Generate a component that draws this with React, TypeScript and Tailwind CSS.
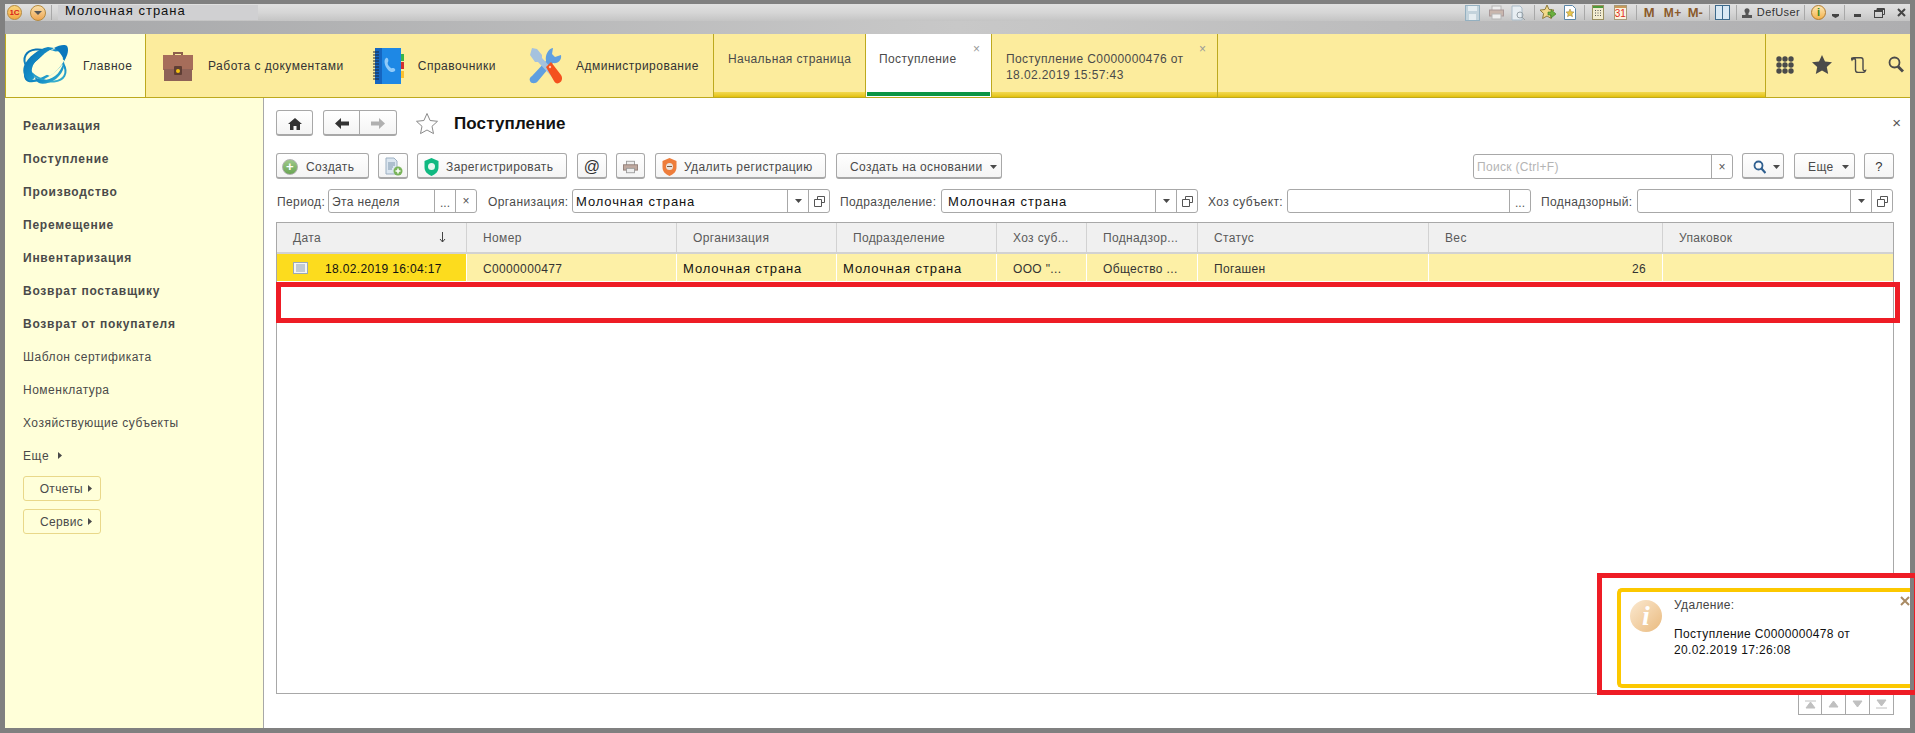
import { ReactNode } from "react";

const font = "font-['Liberation_Sans',Arial,sans-serif]";

const Caret = ({ className = "" }: { className?: string }) => (
  <svg width="7" height="4" viewBox="0 0 7 4" className={className}>
    <path d="M0 0h7L3.5 4z" fill="#4a4a4a" />
  </svg>
);

const RightArrow = () => (
  <svg width="4" height="7" viewBox="0 0 4 7" className="shrink-0">
    <path d="M0 0v7l4-3.5z" fill="#4a4a4a" />
  </svg>
);

const Sep = ({ className = "" }: { className?: string }) => <div className={`w-px h-[15px] bg-[#a8a8a8] shrink-0 ${className}`} />;

const Logo = () => (
  <svg width="48" height="43" viewBox="0 0 48 43" className="shrink-0">
    <defs>
      <linearGradient id="lg" x1="0" y1="0" x2="1" y2="1">
        <stop offset="0" stopColor="#0668ad" />
        <stop offset="0.55" stopColor="#1590c8" />
        <stop offset="1" stopColor="#45bccf" />
      </linearGradient>
    </defs>
    <ellipse cx="24" cy="21.500" rx="23" ry="10" transform="rotate(-35 24 21.500)" fill="none" stroke="url(#lg)" strokeWidth="2.500" />
    <ellipse cx="24" cy="21.500" rx="22" ry="14" transform="rotate(28 24 21.500)" fill="none" stroke="url(#lg)" strokeWidth="2" />
    <path d="M33 4c5-3 11-4 13-2 2 3 1 9-3 15-1-5-5-10-10-13z" fill="#0a78bd" />
    <path d="M27 3C17 5 7 13 3 22c-2 6 0 12 6 15 2-1 4-2 5-4C8 28 11 20 18 14c6-5 12-8 15-10z" fill="url(#lg)" />
    <path d="M43 17C38 9 32 6 29 6 22 10 16 16 14 22c4 4 9 8 15 10 6-4 11-10 14-15z" fill="#ffffd9" />
    <path d="M14 33c5 4 13 4 20-1 4-3 7-8 9-15 1 7-2 13-8 18-6 4-13 6-17 4-2-1-4-3-4-6z" fill="url(#lg)" />
    <path d="M29 31L43 16" stroke="#ffffd9" strokeWidth="0.800" />
  </svg>
);

const Briefcase = () => (
  <svg width="32" height="32" viewBox="0 0 32 32" className="shrink-0">
    <path d="M11 6V2h10v4h-2V4h-6v2z" fill="#8d5f4d" />
    <rect x="1" y="5" width="30" height="15" fill="#a66d5a" />
    <rect x="2" y="19" width="28" height="12" fill="#8e6257" />
    <rect x="12" y="16" width="8" height="9" rx="1" fill="#5f3e34" />
    <circle cx="16" cy="21" r="2" fill="#f5c211" />
  </svg>
);

const Book = () => (
  <svg width="32" height="38" viewBox="0 0 32 38" className="shrink-0">
    <rect x="3" y="1" width="26" height="36" fill="#1e88e5" />
    <rect x="3" y="1" width="7" height="36" fill="#1565c0" />
    <path d="M1 5h6M1 8h6M1 11h6M1 14h6M1 17h6M1 20h6M1 23h6M1 26h6M1 29h6M1 32h6" stroke="#1c2b3a" strokeWidth="1.2" />
    <rect x="29" y="7" width="3" height="7" fill="#3ab54a" />
    <rect x="29" y="15" width="3" height="7" fill="#d32f2f" />
    <rect x="29" y="24" width="3" height="7" fill="#fbc02d" />
    <path d="M14 11c2-1 3 3 2 4-1 1 0 4 3 6 1 1 2-1 4 1 1 2-1 3-3 3-5 0-10-11-6-14z" fill="#90caf9" />
  </svg>
);

const Tools = () => (
  <svg width="33" height="38" viewBox="0 0 33 38" className="shrink-0">
    <path d="M24 1l-1 6 3 3 6-2c1 5-3 9-8 8L9 34c-2 3-7 3-8 0-1-2 0-4 2-5l14-15C16 8 19 2 24 1z" fill="#5f9fe0" />
    <path d="M3 1l5 1 5 6v3l15 16-4 4L9 15H6L1 8z" fill="#a5c2de" />
    <path d="M17 20l5-5 10 13c2 3 1 7-2 8-2 1-4 0-5-2z" fill="#f4511e" />
    <circle cx="21" cy="20" r="1.200" fill="#ffc1ae" />
  </svg>
);

const MenuTab = ({ icon, label, className }: { icon: ReactNode; label: string; className: string }) => (
  <div className={`flex items-center text-[12px] text-[#333] ${className}`}>
    {icon}
    <span className="whitespace-nowrap tracking-[0.5px]">{label}</span>
  </div>
);

const OpenTab = ({ lines, width, active, closable }: { lines: string[]; width: string; active?: boolean; closable?: boolean }) => (
  <div className={`relative ${width} shrink-0 border-r border-[#bda91e] flex flex-col ${active ? "bg-white" : "bg-[#fcec9d]"}`}>
    <div className={`flex-1 pt-[17px] text-[12px] leading-[16px] text-[#4a4a4a] tracking-[0.4px] whitespace-nowrap ${active ? "pl-[13px]" : "pl-[14px]"}`}>
      {lines.map((l) => (
        <div key={l}>{l}</div>
      ))}
    </div>
    {closable && <span className="absolute right-[11px] top-[8px] text-[12px] leading-[14px] text-[#999]">×</span>}
    <div className={active ? "h-[4px] bg-[#0b9444] mx-px mb-[1px]" : "h-[5px] bg-gradient-to-b from-[#f2d94e] to-[#e3c100]"} />
  </div>
);

const SideItem = ({ label, bold }: { label: string; bold?: boolean }) => (
  <div className={`h-[33px] flex items-center text-[#4a4a4a] whitespace-nowrap ${bold ? "text-[12px] font-bold tracking-[0.75px]" : "text-[12px] tracking-[0.5px]"}`}>
    {label}
  </div>
);

const SideButton = ({ label }: { label: string }) => (
  <div className="w-[78px] h-[25px] border border-[#e9d88a] rounded-[3px] flex items-center justify-end pr-[8px] gap-[5px] text-[12px] tracking-[0.3px] text-[#4a4a4a]">
    {label}
    <RightArrow />
  </div>
);

const Btn = ({ className, children }: { className: string; children: ReactNode }) => (
  <div className={`h-[26px] shrink-0 border border-[#a8a8a8] rounded-[3px] border-b-2 bg-gradient-to-b from-white to-[#f4f4f4] flex items-center pt-[2px] text-[12px] tracking-[0.4px] text-[#4a4a4a] whitespace-nowrap ${className}`}>
    {children}
  </div>
);

const Label = ({ className, children }: { className: string; children: ReactNode }) => (
  <div className={`shrink-0 pt-[2px] text-[12px] tracking-[0.4px] text-[#4a4a4a] whitespace-nowrap ${className}`}>{children}</div>
);

const OpenIcon = () => (
  <svg width="11" height="11" viewBox="0 0 11 11" fill="none" stroke="#555" strokeWidth="1">
    <path d="M3.5 3V.5h7v6H8M.5 3.5h7v7h-7z" />
  </svg>
);

const Field = ({ width, value, pick, clear, arrow, open, strong, pad = "pl-[3px]" }: { width: string; value?: string; pick?: boolean; clear?: boolean; arrow?: boolean; open?: boolean; strong?: boolean; pad?: string }) => (
  <div className={`${width} h-[24px] shrink-0 border border-[#a8a8a8] rounded-[3px] flex items-stretch text-[12px]`}>
    <div className={`flex-1 pt-[2px] flex items-center whitespace-nowrap ${pad} ${strong ? "text-[#111] text-[13px] tracking-[0.9px]" : "text-[#4a4a4a] tracking-[0.4px]"}`}>{value}</div>
    {pick && <div className="w-[21px] border-l border-[#a8a8a8] flex items-center justify-center text-[#555] pt-[3px]">...</div>}
    {arrow && <div className="w-[21px] border-l border-[#a8a8a8] flex items-center justify-center"><Caret /></div>}
    {clear && <div className="w-[21px] border-l border-[#a8a8a8] flex items-center justify-center text-[#555]">×</div>}
    {open && <div className="w-[21px] border-l border-[#a8a8a8] flex items-center justify-center"><OpenIcon /></div>}
  </div>
);

const columns = [
  { label: "Номер", w: "w-[210px]", value: "С0000000477" },
  { label: "Организация", w: "w-[160px]", value: "Молочная страна", strong: true },
  { label: "Подразделение", w: "w-[160px]", value: "Молочная страна", strong: true },
  { label: "Хоз суб...", w: "w-[90px]", value: "ООО \"..." },
  { label: "Поднадзор...", w: "w-[111px]", value: "Общество ..." },
  { label: "Статус", w: "w-[231px]", value: "Погашен" },
  { label: "Вес", w: "w-[234px]", value: "26", right: true },
  { label: "Упаковок", w: "flex-1", value: "" },
];

const Grid = () => (
  <div className="w-[1618px] h-[472px] ml-[12px] mt-[9px] border border-[#a8a8a8] bg-white text-[12px] tracking-[0.35px]">
    <div className="flex h-[31px] bg-[#f0f0f0] border-b-2 border-[#d2d2d2] text-[#5a5a5a]">
      <div className="w-[190px] shrink-0 border-r border-[#d2d2d2] pl-[16px] pr-[20px] flex items-center justify-between">
        Дата
        <svg width="7" height="11" viewBox="0 0 7 11"><path d="M3.5 0v10M1 7l2.5 3L6 7" fill="none" stroke="#444" /></svg>
      </div>
      {columns.map((c) => (
        <div key={c.label} className={`${c.w} border-r border-[#d2d2d2] last:border-r-0 pl-[16px] flex items-center whitespace-nowrap`}>{c.label}</div>
      ))}
    </div>
    <div className="flex h-[27px] bg-[#fdf0a6] text-[#333]">
      <div className="w-[190px] shrink-0 bg-[#fcdc1e] border-r border-white pl-[16px] flex items-center gap-[17px] text-[#111]">
        <svg width="15" height="12" viewBox="0 0 15 12">
          <rect x="0.5" y="0.5" width="14" height="11" fill="#f4f4f4" stroke="#9aa9b8" />
          <path d="M3 3h9M3 5h9M3 7h9M3 9h9" stroke="#8ea0b2" />
        </svg>
        <span className="pt-[2px]">18.02.2019 16:04:17</span>
      </div>
      {columns.map((c) => (
        <div key={c.label} className={`${c.w} border-r border-white last:border-r-0 flex items-center pt-[2px] whitespace-nowrap ${c.strong ? "pl-[6px] text-[#111] text-[13px] tracking-[0.9px]" : "pl-[16px]"} ${c.right ? "justify-end pr-[16px]" : ""}`}>
          {c.value}
        </div>
      ))}
    </div>
  </div>
);

const DocIcon = () => (
  <svg width="19" height="19" viewBox="0 0 19 19">
    <path d="M2 1h8l3 3v13H2z" fill="#dbe6f0" stroke="#9db0c2" />
    <path d="M4 6h7M4 8h7M4 10h5M4 12h4" stroke="#7f97ad" />
    <circle cx="14" cy="14" r="4.5" fill="#79b45a" />
    <path d="M14 11.5v5M11.5 14h5" stroke="#fff" strokeWidth="1.5" />
  </svg>
);

const ToolbarIcons = () => (
  <div className="flex items-center text-[#8a5a2b]">
    <svg width="15" height="16" viewBox="0 0 15 16" className="ml-[6px]"><rect x="0.5" y="0.5" width="14" height="15" fill="#c3d3dc" stroke="#94b0c0" /><rect x="3" y="1" width="9" height="5" fill="#e5edf1" /><rect x="4" y="9" width="7" height="6" fill="#e5edf1" /></svg>
    <svg width="15" height="15" viewBox="0 0 15 15" className="ml-[9px]"><rect x="3" y="1" width="9" height="5" fill="#eee" stroke="#b5b5b5" /><rect x="0.5" y="5" width="14" height="6" fill="#c9b6ad" stroke="#a99" /><rect x="3" y="9" width="9" height="5" fill="#eee" stroke="#b5b5b5" /></svg>
    <svg width="15" height="16" viewBox="0 0 15 16" className="ml-[7px]"><path d="M1 1h8l2 2v12H1z" fill="#e8eef2" stroke="#a9bbc8" /><circle cx="9" cy="10" r="3" fill="none" stroke="#96a0a6" /><path d="M11 12l3 3" stroke="#96a0a6" /></svg>
    <Sep className="ml-[8px]" />
    <svg width="16" height="15" viewBox="0 0 16 15" className="ml-[5px]"><path d="M7 0l2 4.500 5 .6-3.700 3.400 1 5L7 11l-4.400 2.500 1-5L0 5.100l5-.6z" fill="#f2d98a" stroke="#8e7a3a" /><path d="M8 7h3V4.500L16 9l-5 4v-3H8z" fill="#6cae3e" stroke="#3a7a1e" strokeWidth="0.6" /></svg>
    <svg width="12" height="15" viewBox="0 0 12 15" className="ml-[8px]"><path d="M.5.5h8l3 3v11H.5z" fill="#fff" stroke="#5a86a8" /><path d="M6 4l1.200 2.700 2.800.3-2.100 1.900.6 2.800L6 10.300l-2.500 1.400.6-2.800L2 7l2.800-.3z" fill="#e9c54a" stroke="#8e7a3a" strokeWidth="0.5" /></svg>
    <Sep className="ml-[8px]" />
    <svg width="12" height="15" viewBox="0 0 12 15" className="ml-[7px]"><rect x="0.5" y="0.5" width="11" height="14" fill="#f2ecd0" stroke="#9a8f60" /><rect x="1" y="1" width="10" height="2" fill="#4e9a3a" /><path d="M3 5.500h1M5.500 5.500h1M8 5.500h1M3 8h1M5.500 8h1M8 8h1M3 10.500h1M5.500 10.500h1M8 10.500h1" stroke="#555" /></svg>
    <div className="ml-[10px] w-[13px] h-[15px] border border-[#a79a7a] bg-[#fbf3df] flex flex-col items-center overflow-hidden">
      <div className="w-full h-[3px] bg-[#c89a5a]" />
      <span className="text-[10px] leading-[11px] text-[#e02b1b]">31</span>
    </div>
    <Sep className="ml-[9px]" />
    <span className="ml-[7px] text-[13px] font-bold leading-none">M</span>
    <span className="ml-[9px] text-[12px] font-bold leading-none tracking-[0.5px]">M+</span>
    <span className="ml-[6px] text-[13px] font-bold leading-none">M-</span>
    <Sep className="ml-[6px]" />
    <div className="ml-[5px] w-[15px] h-[15px] border border-[#3d6a8c] bg-white flex"><div className="w-[7px] border-r border-[#3d6a8c] bg-[#d9e8f3]" /><div className="flex-1 bg-[#d9e8f3]" /></div>
    <Sep className="ml-[6px]" />
    <svg width="10" height="10" viewBox="0 0 10 10" className="ml-[5px]"><circle cx="5" cy="2.800" r="2.500" fill="#555" /><path d="M3.500 5h3v2H10v3H0V7h3.500z" fill="#555" /></svg>
    <span className="ml-[5px] text-[11px] tracking-[0.4px] text-[#333]">DefUser</span>
    <Sep className="ml-[4px]" />
    <div className="ml-[6px] w-[15px] h-[15px] rounded-full border border-[#b27b2e] bg-gradient-to-b from-[#fde7b0] to-[#f2b34c] flex items-center justify-center text-[11px] font-bold leading-none text-[#3c8a1e]">i</div>
    <svg width="7" height="4" viewBox="0 0 7 4" className="ml-[6px] mt-[7px]"><path d="M0 0h7v2L3.500 4 0 2z" fill="#444" /></svg>
    <Sep className="ml-[5px]" />
    <div className="ml-[9px] w-[7px] h-[3px] bg-[#444] mt-[6px]" />
    <svg width="11" height="10" viewBox="0 0 11 10" fill="none" stroke="#444" className="ml-[13px]"><path d="M3 2V.5h7.500v6H8.500" /><rect x="0.500" y="2.500" width="8" height="7" strokeWidth="1" /><path d="M3 1.200h7M1 3.200h7" strokeWidth="1.400" /></svg>
    <svg width="9" height="9" viewBox="0 0 9 9" className="ml-[12px]"><path d="M1 1l7 7M8 1L1 8" stroke="#444" strokeWidth="2" /></svg>
  </div>
);

export default function App() {
  return (
    <div className={`relative w-[1915px] h-[733px] overflow-hidden bg-[#808080] pt-[4px] px-[5px] pb-[5px] flex flex-col ${font}`}>
      {/* title bar */}
      <div className="h-[17px] shrink-0 bg-gradient-to-b from-[#e0e0e0] via-[#d6d6d6] to-[#c4c4c4] flex items-center pr-[4px]">
        <div className="ml-[2px] w-[15px] h-[15px] rounded-full border border-[#b5893d] bg-gradient-to-b from-[#fbd77d] to-[#f3a63f] flex items-center justify-center text-[8px] font-bold leading-none text-[#d8231a]">1С</div>
        <div className="ml-[8px] w-[16px] h-[16px] rounded-full border border-[#b5893d] bg-gradient-to-b from-[#f9dfa8] to-[#eda550] flex items-center justify-center">
          <svg width="8" height="4" viewBox="0 0 8 4"><path d="M0 0h8L4 4z" fill="#555" /></svg>
        </div>
        <Sep className="ml-[5px]" />
        <div className="ml-[6px] w-[200px] h-[15px] bg-[#d0d0d2] pl-[7px] text-[13px] leading-[12px] tracking-[1px] text-[#111] whitespace-nowrap">Молочная страна</div>
        <div className="flex-1" />
        <ToolbarIcons />
      </div>
      <div className="h-[13px] shrink-0 bg-gradient-to-r from-[#a6a7a9] via-[#c8c8c8] to-[#aeaeb0]" />

      {/* sections and open tabs */}
      <div className="h-[64px] shrink-0 bg-[#fcec9d] border-b border-[#bda91e] flex">
        <MenuTab icon={<Logo />} label="Главное" className="w-[141px] shrink-0 bg-[#ffffd9] border-l border-r border-[#bda91e] pl-[15px] gap-[14px]" />
        <div className="w-[568px] shrink-0 flex items-center border-r border-[#bda91e]">
          <MenuTab icon={<Briefcase />} label="Работа с документами" className="pl-[16px] gap-[14px]" />
          <MenuTab icon={<Book />} label="Справочники" className="ml-[28px] gap-[14px]" />
          <MenuTab icon={<Tools />} label="Администрирование" className="ml-[33px] gap-[14px]" />
        </div>
        <OpenTab width="w-[152px]" lines={["Начальная страница"]} />
        <OpenTab width="w-[126px]" lines={["Поступление"]} active closable />
        <OpenTab width="w-[226px]" lines={["Поступление С0000000476 от", "18.02.2019 15:57:43"]} closable />
        <div className="flex-1 flex flex-col">
          <div className="flex-1" />
          <div className="h-[5px] bg-gradient-to-b from-[#f2d94e] to-[#e3c100]" />
        </div>
        <div className="w-[145px] shrink-0 border-l border-[#bda91e] flex items-center pl-[10px] pb-[2px] text-[#4a4a4a]">
          <svg width="18" height="18" viewBox="0 0 18 18" fill="#4a4a4a">
            {[3, 9, 15].flatMap((y) => [3, 9, 15].map((x) => <circle key={`${x}-${y}`} cx={x} cy={y} r="2.700" />))}
          </svg>
          <svg width="20" height="19" viewBox="0 0 20 19" fill="#4a4a4a" className="ml-[18px]"><path d="M10 0l3 6.500 7 .8-5.200 4.800 1.400 6.900L10 15.500 3.800 19l1.400-6.900L0 7.300l7-.8z" /></svg>
          <svg width="16" height="16" viewBox="0 0 16 16" fill="none" stroke="#4a4a4a" strokeWidth="1.400" className="ml-[19px]"><path d="M1 3C0 1 1 .7 3 .7h7c1.500 0 2 1 2 2.300v9c0 1.500 1 2 2.500 1.500-.5 1.500-1.500 2-3 2H7c-1.500 0-2.500-1-2.500-2.500V3C4.500 1.500 2 1 1 3z" /></svg>
          <svg width="16" height="17" viewBox="0 0 16 17" fill="none" stroke="#4a4a4a" className="ml-[21px]"><circle cx="6.500" cy="6.500" r="5" strokeWidth="1.800" /><path d="M10 10.500l5 5" strokeWidth="3" /></svg>
        </div>
      </div>

      {/* body */}
      <div className="flex-1 flex min-h-0 bg-white">
        <div className="w-[259px] shrink-0 bg-[#ffffd9] border-r border-[#a8a8a8] pl-[18px] pt-[11px]">
          <SideItem label="Реализация" bold />
          <SideItem label="Поступление" bold />
          <SideItem label="Производство" bold />
          <SideItem label="Перемещение" bold />
          <SideItem label="Инвентаризация" bold />
          <SideItem label="Возврат поставщику" bold />
          <SideItem label="Возврат от покупателя" bold />
          <SideItem label="Шаблон сертификата" />
          <SideItem label="Номенклатура" />
          <SideItem label="Хозяйствующие субъекты" />
          <div className="h-[33px] flex items-center gap-[9px] text-[12px] tracking-[0.6px] text-[#4a4a4a]">
            Еще
            <RightArrow />
          </div>
          <div className="flex flex-col gap-[8px] mt-[4px]">
            <SideButton label="Отчеты" />
            <SideButton label="Сервис" />
          </div>
        </div>

        <div className="flex-1 min-w-0 relative">
          <div className="flex items-start pl-[12px] pt-[12px] h-[55px]">
            <Btn className="w-[37px] justify-center">
              <svg width="14" height="12" viewBox="0 0 14 12" fill="#333"><path d="M7 0l7 6h-2v6H8.500V8h-3v4H2V6H0z" /></svg>
            </Btn>
            <div className="ml-[10px] flex">
              <Btn className="w-[37px] justify-center rounded-r-none">
                <svg width="14" height="11" viewBox="0 0 14 11" fill="#333"><path d="M6 0v3.500h8v4H6V11L0 5.500z" /></svg>
              </Btn>
              <Btn className="w-[37px] justify-center rounded-l-none border-l-0">
                <svg width="14" height="11" viewBox="0 0 14 11" fill="#b0b0b0"><path d="M8 0v3.500H0v4h8V11l6-5.500z" /></svg>
              </Btn>
            </div>
            <svg width="24" height="23" viewBox="0 0 24 23" fill="none" stroke="#8a8a8a" className="ml-[18px] mt-[2px]"><path d="M12 1.500l3.100 7 7.400.8-5.500 5 1.500 7.300L12 18l-6.500 3.600L7 14.300l-5.500-5 7.400-.8z" /></svg>
            <div className="ml-[15px] mt-[4px] text-[17px] leading-[20px] font-bold tracking-[0.1px] text-[#111]">Поступление</div>
            <div className="flex-1" />
            <span className="mr-[9px] mt-[5px] text-[15px] leading-[16px] text-[#555]">×</span>
          </div>

          <div className="flex items-start pl-[12px] h-[36px]">
            <Btn className="w-[93px] pl-[5px] gap-[8px]">
              <div className="w-[16px] h-[16px] rounded-full bg-gradient-to-b from-[#9fc98a] to-[#6aa653] border border-[#b0b0b0] flex items-center justify-center text-white font-bold text-[13px] leading-none">+</div>
              Создать
            </Btn>
            <Btn className="ml-[9px] w-[30px] justify-center"><DocIcon /></Btn>
            <Btn className="ml-[9px] w-[150px] pl-[6px] gap-[7px]">
              <svg width="15" height="18" viewBox="0 0 15 18"><path d="M7.500 0l7 3v6c0 5-3 7-7 9-4-2-7-4-7-9V3z" fill="#10b981" /><circle cx="7.500" cy="8.500" r="3.500" fill="#e6f7ef" /></svg>
              Зарегистрировать
            </Btn>
            <Btn className="ml-[10px] w-[30px] justify-center text-[16px] text-[#333]">@</Btn>
            <Btn className="ml-[9px] w-[29px] justify-center">
              <svg width="15" height="14" viewBox="0 0 17 15"><rect x="4" y="1" width="9" height="5" fill="#eee" stroke="#999" /><rect x="0.500" y="5" width="16" height="6" fill="#bfa9a0" stroke="#8f7c74" /><rect x="4" y="9" width="9" height="5" fill="#eee" stroke="#999" /></svg>
            </Btn>
            <Btn className="ml-[10px] w-[171px] pl-[6px] gap-[7px]">
              <svg width="15" height="18" viewBox="0 0 15 18"><path d="M7.500 0l7 3v6c0 5-3 7-7 9-4-2-7-4-7-9V3z" fill="#ee7d3b" /><circle cx="7.500" cy="8.500" r="3.500" fill="#e8e3de" /><path d="M5 8.500h5" stroke="#7b5a44" /></svg>
              Удалить регистрацию
            </Btn>
            <Btn className="ml-[10px] w-[166px] pl-[13px] gap-[7px]">
              Создать на основании
              <Caret />
            </Btn>
            <div className="flex-1" />
            <div className="w-[260px] h-[25px] mt-[1px] shrink-0 border border-[#a8a8a8] rounded-[3px] flex text-[12px]">
              <div className="flex-1 pl-[3px] flex items-center text-[#b4b4b4] tracking-[0.3px]">Поиск (Ctrl+F)</div>
              <div className="w-[21px] border-l border-[#a8a8a8] flex items-center justify-center text-[#555]">×</div>
            </div>
            <Btn className="ml-[9px] w-[42px] pl-[10px] gap-[7px]">
              <svg width="13" height="14" viewBox="0 0 13 14" fill="none" stroke="#2f5f8f"><circle cx="5.500" cy="5.500" r="4" strokeWidth="1.800" /><path d="M8.500 8.500l4 4.500" strokeWidth="2.200" /></svg>
              <Caret />
            </Btn>
            <Btn className="ml-[10px] w-[61px] pl-[13px] gap-[8px]">
              Еще
              <Caret />
            </Btn>
            <Btn className="ml-[9px] mr-[16px] w-[30px] justify-center text-[#333] text-[13px]">?</Btn>
          </div>

          <div className="flex items-center pl-[13px] h-[24px]">
            <Label className="w-[51px]">Период:</Label>
            <Field width="w-[149px]" value="Эта неделя" pick clear />
            <Label className="ml-[11px] w-[84px]">Организация:</Label>
            <Field width="w-[258px]" value="Молочная страна" arrow open strong />
            <Label className="ml-[10px] w-[101px]">Подразделение:</Label>
            <Field width="w-[257px]" value="Молочная страна" arrow open strong pad="pl-[6px]" />
            <Label className="ml-[10px] w-[79px]">Хоз субъект:</Label>
            <Field width="w-[244px]" pick />
            <Label className="ml-[10px] w-[96px]">Поднадзорный:</Label>
            <Field width="w-[256px]" arrow open />
          </div>

          <Grid />

          <div className="flex justify-end mr-[16px] h-[21px]">
            {["M0 2h11M1 9l4.500-6L10 9z", "M1 8l4.500-6L10 8z", "M1 2l4.500 6L10 2z", "M1 1l4.500 6L10 1zM0 9h11"].map((d) => (
              <div key={d} className="w-[24px] border border-t-0 border-l-0 first:border-l border-[#a8a8a8] flex items-center justify-center">
                <svg width="11" height="10" viewBox="0 0 11 10"><path d={d} fill="#c0c0c0" stroke="#c0c0c0" /></svg>
              </div>
            ))}
          </div>
        </div>
      </div>

      {/* annotation over the empty row */}
      <div className="absolute left-[276px] top-[282px] w-[1624px] h-[41px] border-[5px] border-[#ee1c25]" />

      {/* notification with its annotation, the window frame shows through on the right */}
      <div className="absolute left-[1597px] top-[573px] w-[318px] h-[122px] border-[5px] border-r-[1px] border-[#ee1c25] bg-[#808080]">
        <div className="w-[308px] h-full bg-white pt-[10px] pl-[15px]">
          <div className="relative w-[293px] h-[100px] border-[4px] border-r-0 border-[#fcc800] rounded-l-[5px] flex text-[12px] tracking-[0.35px]">
            <div className="w-[32px] h-[32px] mt-[8px] ml-[9px] shrink-0 rounded-full bg-gradient-to-br from-[#fbe9d0] to-[#e9ba7e] flex items-center justify-center text-white font-['Liberation_Serif',serif] italic font-bold text-[28px] leading-none">i</div>
            <div className="ml-[12px] pt-[5px] leading-[16px] whitespace-nowrap">
              <div className="text-[#444]">Удаление:</div>
              <div className="mt-[13px] text-[#111]">Поступление С0000000478 от</div>
              <div className="text-[#111]">20.02.2019 17:26:08</div>
            </div>
            <svg width="10" height="10" viewBox="0 0 10 10" className="absolute right-0 top-[4px]"><path d="M1 1l8 8M9 1L1 9" stroke="#a98a63" strokeWidth="2" /></svg>
          </div>
        </div>
      </div>
    </div>
  );
}
